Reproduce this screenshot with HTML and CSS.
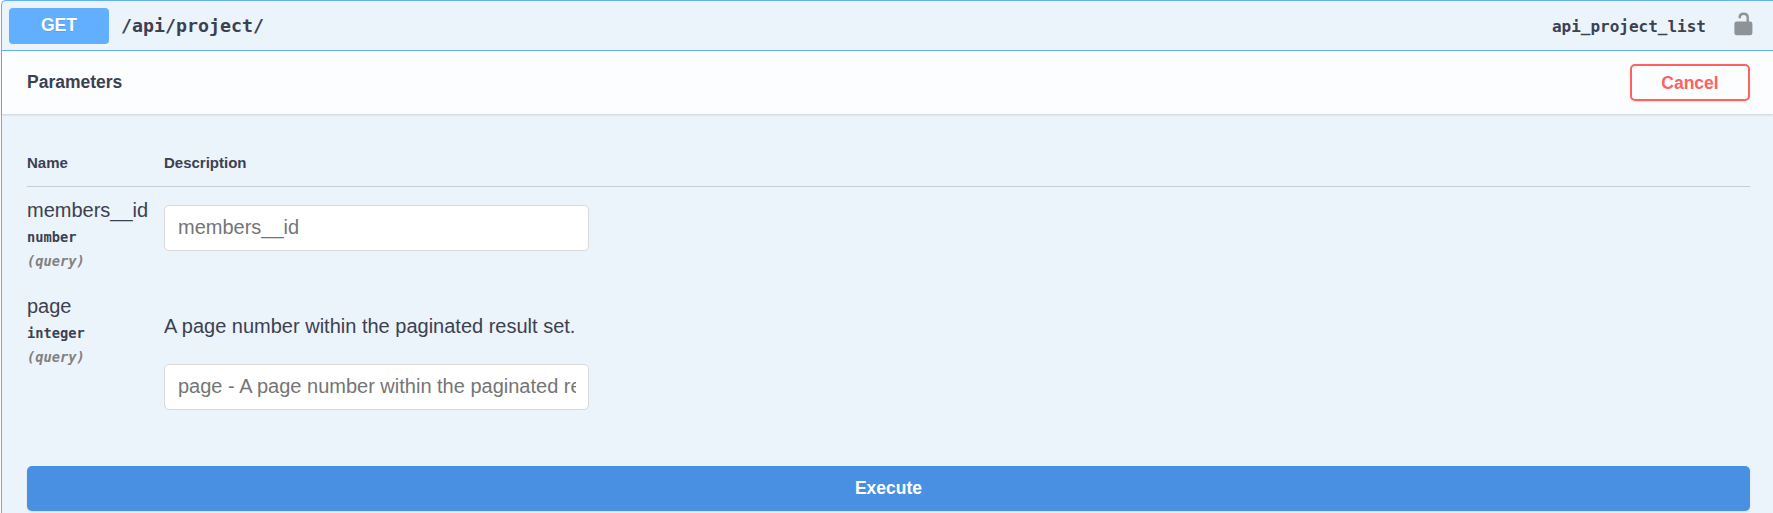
FILE: index.html
```html
<!DOCTYPE html>
<html lang="en">
<head>
<meta charset="utf-8">
<title>API project list</title>
<link rel="stylesheet" href="styles.css">
</head>
<body>
<section class="opblock">
  <header class="summary">
    <span class="method">GET</span>
    <span class="path">/api/project/</span>
    <span class="operation">api_project_list</span>
    <svg class="lock" viewBox="0 0 20 24" width="20" height="24">
      <path d="M5.7 6.3V5.6C5.7 3.2 7.3 1.8 9.6 1.8S13.7 3.2 13.7 5.6V11" fill="none" stroke="#8d9396" stroke-width="2.4"/>
      <rect x="0.4" y="9.5" width="18" height="13.7" rx="2.3" fill="#8d9396"/>
    </svg>
  </header>
  <div class="section-header">
    <h4 class="section-title">Parameters</h4>
    <button class="cancel">Cancel</button>
  </div>
  <div class="parameters">
    <div class="row head">
      <span>Name</span>
      <span>Description</span>
    </div>
    <div class="row first">
      <div>
        <div class="name">members__id</div>
        <div class="type">number</div>
        <div class="in">(query)</div>
      </div>
      <div class="field"><input class="input" type="text" placeholder="members__id"></div>
    </div>
    <div class="row second">
      <div>
        <div class="name">page</div>
        <div class="type">integer</div>
        <div class="in">(query)</div>
      </div>
      <div class="field">
        <p class="note">A page number within the paginated result set.</p>
        <input class="input" type="text" placeholder="page - A page number within the paginated result set.">
      </div>
    </div>
  </div>
  <div class="execute-wrap"><button class="execute">Execute</button></div>
</section>
</body>
</html>
```

FILE: styles.css
```css
* { box-sizing: border-box; }
body {
  margin: 0;
  height: 513px;
  overflow: hidden;
  background: #fafafa;
  color: #3b4151;
  font-family: "Liberation Sans", Arial, sans-serif;
}
.opblock {
  margin-left: 1px;
  height: 530px;
  background: #ebf3fb;
  border: 1px solid #61affe;
  border-right: 0;
  border-radius: 5px 0 0 5px;
}
.summary {
  display: flex;
  align-items: center;
  height: 50px;
  padding: 0 19px 0 7px;
  border-bottom: 1px solid #61affe;
}
.method {
  width: 100px;
  height: 36px;
  border-radius: 4px;
  background: #61affe;
  color: #fff;
  font-size: 17.5px;
  font-weight: 700;
  line-height: 34px;
  text-align: center;
  text-shadow: 0 1px 0 rgba(0, 0, 0, .1);
}
.path, .operation, .type, .in {
  font-family: "DejaVu Sans Mono", monospace;
  font-weight: 700;
}
.path { margin-left: 12px; font-size: 18.27px; }
.operation { margin-left: auto; margin-right: 28px; padding-top: 1px; font-size: 16px; }
.lock { margin-top: -4px; }
.section-header {
  display: flex;
  align-items: center;
  justify-content: space-between;
  height: 63px;
  padding: 0 23px 0 25px;
  background: #fcfdff;
  box-shadow: 0 1px 2px rgba(0, 0, 0, .14);
}
.section-title { margin: 0; font-size: 17.5px; }
.cancel {
  width: 120px;
  height: 37px;
  padding: 2px 0 0;
  border: 2px solid #ff6060;
  border-radius: 5px;
  background: transparent;
  box-shadow: 0 1px 2px rgba(0, 0, 0, .1);
  color: #ff6060;
  font: 700 17.5px "Liberation Sans", Arial, sans-serif;
}
.parameters { padding: 25px 23px 0 25px; height: 352px; }
.row { display: grid; grid-template-columns: 137px 1fr; }
.head {
  height: 48px;
  align-items: center;
  border-bottom: 1px solid #c4cedb;
  font-size: 15px;
  font-weight: 700;
}
.first { height: 96px; padding-top: 10px; }
.second { padding-top: 10px; }
.name { font-size: 20px; line-height: 27px; }
.type { font-size: 13.7px; line-height: 26px; }
.in { font-size: 13.7px; line-height: 22px; font-style: italic; color: #808080; }
.input {
  display: block;
  width: 425px;
  height: 46px;
  padding: 0 12px 1px 13px;
  border: 1px solid #d9d9d9;
  border-radius: 5px;
  background: #fff;
  font: 20px "Liberation Sans", Arial, sans-serif;
}
.input::placeholder { color: #757575; }
.first .field { padding-top: 8px; }
.note { margin: 20px 0 25px; font-size: 20px; line-height: 26px; }
.execute-wrap { padding: 0 23px 0 25px; }
.execute {
  display: block;
  width: 100%;
  height: 45px;
  border: 0;
  border-radius: 5px;
  background: #4990e2;
  box-shadow: 0 1px 2px rgba(0, 0, 0, .1);
  color: #fff;
  font: 700 17.5px "Liberation Sans", Arial, sans-serif;
}
```
